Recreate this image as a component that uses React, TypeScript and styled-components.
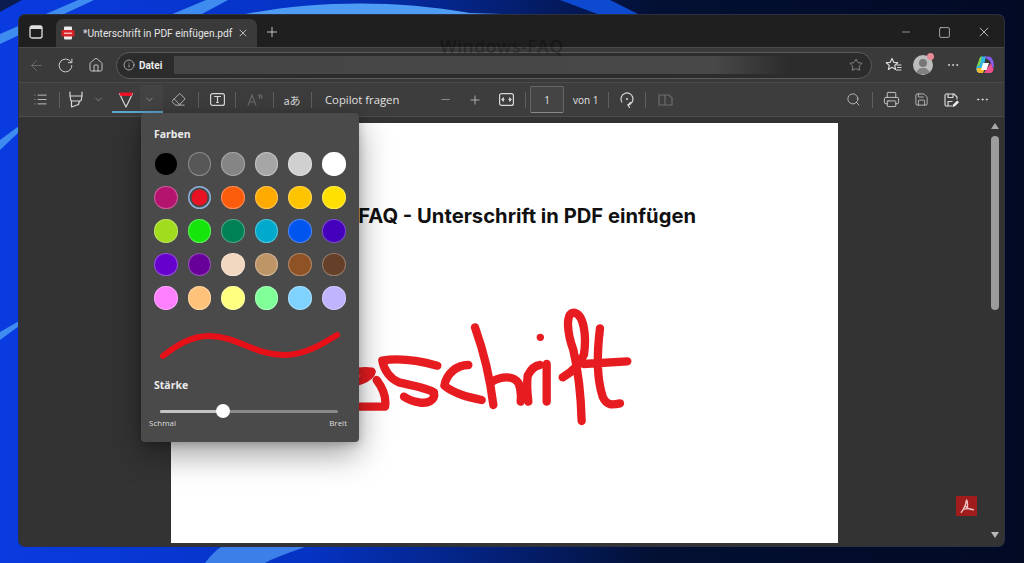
import React from 'react'
import styled, { createGlobalStyle } from 'styled-components'
import { ChevronDown, Eraser, Home, Info, List, Minus, MoreHorizontal, Plus, Printer, RotateCw, Search, Star, X, Square, ArrowLeft, Save } from 'lucide-react'

const Global = createGlobalStyle`
  html, body { margin: 0; padding: 0; background: #020a24; overflow: hidden; }
  * { box-sizing: border-box; }
`

const Desktop = styled.div`
  position: relative;
  width: 1024px;
  height: 563px;
  padding: 15px 20px 17px 19px;
  display: flex;
  font-family: "Open Sans", "Noto Sans", sans-serif;
  color: #e6e6e6;
`

const Wallpaper = styled.svg`
  position: absolute;
  inset: 0;
`

const Window = styled.div`
  position: relative;
  flex: 1;
  display: flex;
  flex-direction: column;
  background: #333;
  border-radius: 6px;
  box-shadow: 0 0 0 1px #2c3040;
  overflow: hidden;
`

const Watermark = styled.div`
  position: absolute;
  left: 421px;
  top: 19px;
  font-size: 17.5px;
  font-weight: 600;
  letter-spacing: 0.6px;
  color: rgba(0, 0, 0, 0.25);
  filter: blur(0.6px);
  z-index: 5;
`

const TabStrip = styled.div`
  height: 33px;
  flex: none;
  display: flex;
  align-items: flex-end;
  background: #1f1f1f;
  border-bottom: 1px solid #4b4b4b;
`

const StripBtn = styled.div<{ $w: number }>`
  width: ${p => p.$w}px;
  height: 100%;
  padding-top: 2px;
  flex: none;
  display: flex;
  align-items: center;
  justify-content: center;
  color: #dcdcdc;
`

const Tab = styled.div`
  width: 201px;
  height: 28px;
  margin-left: 3px;
  padding: 0 8px 0 5px;
  flex: none;
  display: flex;
  align-items: center;
  background: #3a3a3a;
  border-radius: 7px 7px 0 0;
  color: #e4e4e4;
`

const TabTitle = styled.span`
  flex: 1;
  margin-left: 8px;
  font-family: Roboto, "Open Sans", sans-serif;
  font-size: 10.2px;
  white-space: nowrap;
`

const WinControls = styled.div`
  margin-left: auto;
  display: flex;
  height: 100%;
  padding-right: 1px;
`

const AddressRow = styled.div`
  height: 34px;
  flex: none;
  display: flex;
  align-items: center;
  background: #3a3a3a;
  padding: 0 0 0 5px;
`

const RowBtn = styled.div<{ $w?: number; $ml?: number; $dim?: boolean }>`
  width: ${p => p.$w ?? 24}px;
  margin-left: ${p => p.$ml ?? 0}px;
  flex: none;
  display: flex;
  align-items: center;
  justify-content: center;
  color: ${p => (p.$dim ? '#777' : '#d8d8d8')};
`

const Pill = styled.div`
  width: 756px;
  height: 27px;
  margin-left: 8px;
  flex: none;
  display: flex;
  align-items: center;
  padding: 0 8px 0 6px;
  background: #2c2c2c;
  border: 1px solid #5c5c5c;
  border-radius: 14px;
`

const Scheme = styled.span`
  margin-left: 4px;
  font-family: Roboto, "Open Sans", sans-serif;
  font-size: 10px;
  font-weight: 700;
  color: #ededed;
`

const UrlBlur = styled.div`
  flex: 1;
  height: 18px;
  margin: 0 60px 0 12px;
  background: linear-gradient(to right, #454545 0, #484848 88%, #2c2c2c 100%);
`

const Avatar = styled.div`
  position: relative;
  width: 20px;
  height: 20px;
  border-radius: 50%;
  background: #bdbdbd;
  overflow: hidden;
`

const AvatarWrap = styled.div`
  position: relative;
  margin-left: 8px;
  width: 20px;
  height: 20px;
  flex: none;
`

const Badge = styled.div`
  position: absolute;
  right: -1px;
  top: -2px;
  width: 7px;
  height: 7px;
  border-radius: 50%;
  background: #e88c98;
`

const Toolbar = styled.div`
  height: 35px;
  flex: none;
  display: flex;
  align-items: center;
  padding: 0 10px 0 9px;
  background: #3d3d3d;
  border-top: 1px solid #4a4a4a;
  border-bottom: 1px solid #4d4d4d;
`

const Sep = styled.div<{ $ml: number }>`
  width: 1px;
  height: 16px;
  flex: none;
  margin-left: ${p => p.$ml}px;
  background: #5f5f5f;
`

const ActiveTool = styled.div`
  position: relative;
  width: 51px;
  height: 29px;
  margin-left: 7px;
  flex: none;
  display: flex;
  align-items: center;
  &::after {
    content: '';
    position: absolute;
    left: 0;
    right: 0;
    bottom: 1px;
    height: 2px;
    background: #5ea6d2;
  }
`

const ChevronCell = styled.div`
  flex: 1;
  height: 100%;
  display: flex;
  align-items: center;
  justify-content: center;
  padding-right: 5px;
  color: #bbb;
  background: #434343;
`

const Translate = styled.span`
  font-size: 11px;
  font-family: "Noto Sans CJK JP", "Open Sans", sans-serif;
  color: #d8d8d8;
`

const ToolLabel = styled.span<{ $w: number; $ml: number; $size?: number }>`
  width: ${p => p.$w}px;
  margin-left: ${p => p.$ml}px;
  flex: none;
  font-size: ${p => p.$size ?? 11.3}px;
  color: #e2e2e2;
  white-space: nowrap;
`

const PageInput = styled.div`
  width: 34px;
  height: 27px;
  margin-left: 4px;
  flex: none;
  display: flex;
  align-items: center;
  justify-content: center;
  font-size: 10px;
  color: #e2e2e2;
  background: #444;
  border: 1px solid #666;
  border-bottom-color: #8a8a8a;
  border-radius: 2px;
`

const RightTools = styled.div`
  margin-left: auto;
  display: flex;
  align-items: center;
`

const Main = styled.div`
  position: relative;
  flex: 1;
  min-height: 0;
  display: flex;
`

const PageArea = styled.div`
  flex: 1;
  padding: 6px 147px 3px 152px;
  display: flex;
`

const Page = styled.div`
  position: relative;
  flex: 1;
  background: #fff;
  padding-top: 82px;
  overflow: hidden;
`

const Heading = styled.h1`
  margin: 0;
  padding-right: 142px;
  text-align: right;
  font: 700 20.2px/22px Inter, "Liberation Sans", sans-serif;
  color: #111;
  white-space: nowrap;
`

const Signature = styled.svg`
  position: absolute;
  left: 169px;
  top: 67px;
`

const AcrobatBadge = styled.div`
  position: absolute;
  right: 27px;
  bottom: 30px;
  width: 21px;
  height: 20px;
  background: #a11d1d;
  display: flex;
  align-items: center;
  justify-content: center;
`

const Scrollbar = styled.div`
  width: 19px;
  flex: none;
  display: flex;
  flex-direction: column;
  align-items: center;
  padding: 6px 0 8px;
`

const ScrollThumb = styled.div`
  width: 8px;
  height: 174px;
  margin-top: 7px;
  background: #9c9c9c;
  border-radius: 4px;
`

const ScrollArrow = styled.div<{ $down?: boolean }>`
  width: 0;
  height: 0;
  border-left: 4.5px solid transparent;
  border-right: 4.5px solid transparent;
  ${p => (p.$down ? 'border-top: 6px solid #b8b8b8; margin-top: auto;' : 'border-bottom: 6px solid #a8a8a8;')}
`

const Popup = styled.div`
  position: absolute;
  left: 122px;
  top: -4px;
  width: 218px;
  height: 329px;
  padding: 14px 13px 0;
  background: #4a4a4a;
  border-radius: 4px;
  box-shadow: 0 12px 32px rgba(0, 0, 0, 0.38), 0 2px 8px rgba(0, 0, 0, 0.2);
  z-index: 3;
`

const SectionTitle = styled.div<{ $mt?: number }>`
  margin-top: ${p => p.$mt ?? 0}px;
  font-size: 10.5px;
  line-height: 15px;
  font-weight: 700;
  color: #ececec;
`

const Swatches = styled.div`
  display: grid;
  grid-template-columns: repeat(6, 23.6px);
  grid-auto-rows: 23.6px;
  gap: 10px;
  margin-top: 10px;
`

const Swatch = styled.div<{ $color: string; $selected?: boolean }>`
  border-radius: 50%;
  background: ${p => p.$color};
  box-shadow: ${p => (p.$selected
    ? 'inset 0 0 0 1.5px #86b4dc, inset 0 0 0 3.5px #4a4a4a'
    : 'inset 0 0 0 1px rgba(255, 255, 255, 0.3)')};
`

const Wave = styled.svg`
  display: block;
  margin: 13px 0 0 5px;
`

const SliderTrack = styled.div`
  position: relative;
  height: 3px;
  margin: 17px 8px 0 6px;
  background: #8a8a8a;
  border-radius: 2px;
`

const SliderFill = styled.div`
  height: 100%;
  background: #c4c4c4;
  border-radius: 2px;
`

const SliderThumb = styled.div`
  position: absolute;
  top: -6px;
  width: 14px;
  height: 14px;
  margin-left: -7px;
  border-radius: 50%;
  background: #fff;
`

const SliderLabels = styled.div`
  display: flex;
  justify-content: space-between;
  margin: 4px -1px 0 -5px;
  font-size: 8px;
  line-height: 11px;
  color: #dedede;
`

const colors = [
  '#000000', '#575757', '#858585', '#a6a6a6', '#d0d0d0', '#ffffff',
  '#b5146e', '#e81224', '#fb5c0b', '#ffaa00', '#ffc400', '#ffe000',
  '#a2dc1e', '#16e50c', '#008055', '#00aacc', '#0055ee', '#4400bb',
  '#6600cc', '#660099', '#f2d7c0', '#bd9567', '#8e5224', '#663f28',
  '#ff80ff', '#ffc27a', '#ffff80', '#80ff99', '#80d2ff', '#c0b3ff',
]

const strength = 35.5

const icon = { fill: 'none', stroke: 'currentColor', strokeWidth: 1.2, strokeLinecap: 'round' as const, strokeLinejoin: 'round' as const }

const SidebarIcon = () => (
  <svg width="14" height="14" viewBox="0 0 14 14" fill="none" stroke="#e0e0e0" strokeWidth="1.3">
    <rect x="1" y="1" width="12" height="12" rx="2" />
    <path d="M1 3a2 2 0 0 1 2-2h8a2 2 0 0 1 2 2v1H1z" fill="#e0e0e0" stroke="none" />
  </svg>
)

const PdfTabIcon = () => (
  <svg width="14" height="14" viewBox="0 0 14 14" style={{ flex: 'none' }}>
    <rect x="3" y="0.5" width="8" height="13" fill="#ececec" rx="1" />
    <rect x="0.5" y="4" width="13" height="6.5" fill="#d9232a" rx="1" />
    <rect x="3" y="6.6" width="8" height="1.3" fill="#f7c9ca" />
  </svg>
)

const HighlighterIcon = () => (
  <svg width="16" height="18" viewBox="0 0 16 18" {...icon}>
    <path d="M2 1v4h12V1M2 5l1 5h10l1-5M3.5 10v6l7-2.5 1-3.5" />
  </svg>
)

const PenIcon = () => (
  <svg width="16" height="18" viewBox="0 0 16 18" {...icon}>
    <path d="M1.5 2.5h13L10 12 8 16l-2-4z" />
    <path d="M1 1.5h14l-1.6 3.5H2.6z" fill="#e81224" stroke="none" />
  </svg>
)

const TextBoxIcon = () => (
  <svg width="15" height="13" viewBox="0 0 15 13" {...icon}>
    <rect x="0.6" y="0.6" width="13.8" height="11.8" rx="2" />
    <path d="M4.5 3.5h6M7.5 3.5v6M6.5 9.5h2" />
  </svg>
)

const ReadIcon = () => (
  <svg width="16" height="14" viewBox="0 0 16 14" fill="none" stroke="#6d6d6d" strokeWidth="1.1">
    <path d="M1 12.5 5 2l4 10.5M2.5 9h5M11 2c1.5 1 2 2.5 2 4M13 1c1.5 1.5 2 3 2 4.5" />
  </svg>
)

const FitIcon = () => (
  <svg width="15" height="13" viewBox="0 0 15 13" {...icon}>
    <rect x="0.6" y="0.6" width="13.8" height="11.8" rx="2" />
    <path d="M3 6.5h2M3 6.5l1.5-1.5M3 6.5 4.5 8M12 6.5h-2M12 6.5 10.5 5M12 6.5 10.5 8" />
  </svg>
)

const RotateIcon = () => (
  <svg width="16" height="17" viewBox="0 0 16 17" {...icon}>
    <path d="M2.8 11A6 6 0 1 1 9 13.9" />
    <path d="M11.5 11.5 9 14l1.5 2.5" />
    <circle cx="8" cy="8" r="1" fill="currentColor" stroke="none" />
  </svg>
)

const PageViewIcon = () => (
  <svg width="15" height="13" viewBox="0 0 15 13" fill="none" stroke="#6d6d6d" strokeWidth="1.2">
    <path d="M1 2h6v10H1zM7 2h4l3 3v7H7z" />
  </svg>
)

const SaveEditIcon = () => (
  <svg width="16" height="16" viewBox="0 0 16 16" {...icon}>
    <path d="M9 14H3.5A1.5 1.5 0 0 1 2 12.5v-9A1.5 1.5 0 0 1 3.5 2H11l3 3v2" />
    <path d="M5 2v3.5h5V2M5 14V9.5h4" />
    <path d="M9.5 15l.7-2.5 4-4 1.8 1.8-4 4z" fill="#eee" stroke="none" />
  </svg>
)

const FavoritesIcon = () => (
  <svg width="17" height="16" viewBox="0 0 17 16" {...icon}>
    <path d="M7 1.5 8.7 5.3l4 .4-3 2.7.9 4-3.6-2.1-3.600 2.100.9-4-3-2.700 4-.4zM12 8h4M12.500 10.500H16M11.500 13H16" />
  </svg>
)

const CopilotIcon = () => (
  <svg width="20" height="20" viewBox="0 0 20 20">
    <path d="M6 1.5h5L7 18H5C2 18 0.5 15 1.5 12z" fill="#2fb4e8" />
    <path d="M1.5 12 4 5c.5-2 1-3.5 3-3.5L5 10z" fill="#7ad14a" />
    <path d="M2 13c-1 3 1 5 3 5h3l2-5z" fill="#f4b62c" />
    <path d="M9 18h6c2 0 3-1.5 3.5-3.5L16 8z" fill="#ec4f8f" />
    <path d="M9 1.5h5c2 0 4 3 4.5 6L19 12c0 1-1 1-1.5 0L15 6z" fill="#8a5cf0" />
    <path d="M8 8h6l-2.5 7H6z" fill="#fff" />
  </svg>
)

function Tool({ children, ml }: { children: React.ReactNode; ml?: number }) {
  return <RowBtn $ml={ml}>{children}</RowBtn>
}

export default function App() {
  return (
    <Desktop>
      <Global />
      <Wallpaper width="1024" height="563" viewBox="0 0 1024 563">
        <defs>
          <linearGradient id="wp" x1="0" x2="1" y1="0" y2="0">
            <stop offset="0" stopColor="#0a3be0" />
            <stop offset="0.3" stopColor="#0533c4" />
            <stop offset="0.5" stopColor="#041f70" />
            <stop offset="0.64" stopColor="#031033" />
            <stop offset="1" stopColor="#020a24" />
          </linearGradient>
        </defs>
        <rect width="1024" height="563" fill="url(#wp)" />
        <path d="M0 0h22L0 12z" fill="#0a1c50" />
        <path d="M0 34 78 0h16L0 44z" fill="#3f8cf0" />
        <path d="M170 15 206 0h22l-28 15z" fill="#3f8cf0" />
        <path d="M0 150 19 132v-6L0 140zM0 340l19-14v-5L0 332z" fill="#3f8cf0" />
        <path d="M240 15c70-14 150-16 230-2l60 2z" fill="#4f9cf5" />
        <path d="M560 0h50l30 15h-40z" fill="#0d4ad0" />
        <path d="M205 563c15-20 28-26 60-20h50c-20 8-40 14-50 20z" fill="#3c7fe8" />
      </Wallpaper>
      <Window>
        <Watermark>Windows-FAQ</Watermark>
        <TabStrip>
          <StripBtn $w={34}><SidebarIcon /></StripBtn>
          <Tab>
            <PdfTabIcon />
            <TabTitle>*Unterschrift in PDF einfügen.pdf</TabTitle>
            <X size={12} strokeWidth={1.5} />
          </Tab>
          <StripBtn $w={30}><Plus size={16} strokeWidth={1.3} /></StripBtn>
          <WinControls>
            <StripBtn $w={38}><Minus size={12} strokeWidth={1.2} /></StripBtn>
            <StripBtn $w={39}><Square size={13} strokeWidth={1.3} /></StripBtn>
            <StripBtn $w={39}><X size={16} strokeWidth={1.2} /></StripBtn>
          </WinControls>
        </TabStrip>
        <AddressRow>
          <RowBtn $dim><ArrowLeft size={17} strokeWidth={1.1} /></RowBtn>
          <RowBtn $ml={5}><RotateCw size={17} strokeWidth={1.3} /></RowBtn>
          <RowBtn $ml={7}><Home size={16} strokeWidth={1.3} /></RowBtn>
          <Pill>
            <Info size={12} strokeWidth={1.3} color="#ddd" />
            <Scheme>Datei</Scheme>
            <UrlBlur />
            <Star size={14} strokeWidth={1.2} color="#aaa" />
          </Pill>
          <RowBtn $ml={9}><FavoritesIcon /></RowBtn>
          <AvatarWrap>
            <Avatar>
              <svg width="20" height="20" viewBox="0 0 20 20">
                <circle cx="10" cy="8" r="4" fill="#777" />
                <path d="M3 19c1-5 4-6 7-6s6 1 7 6z" fill="#808080" />
              </svg>
            </Avatar>
            <Badge />
          </AvatarWrap>
          <RowBtn $ml={8}><MoreHorizontal size={14} strokeWidth={1.5} /></RowBtn>
          <RowBtn $ml={8}><CopilotIcon /></RowBtn>
        </AddressRow>
        <Toolbar>
          <Tool><List size={15} strokeWidth={1.3} /></Tool>
          <Sep $ml={7} />
          <Tool ml={4}><HighlighterIcon /></Tool>
          <RowBtn $w={14} $ml={3}><ChevronDown size={11} strokeWidth={1.3} color="#aaa" /></RowBtn>
          <ActiveTool>
            <RowBtn $w={28}><PenIcon /></RowBtn>
            <ChevronCell><ChevronDown size={11} strokeWidth={1.3} /></ChevronCell>
          </ActiveTool>
          <Tool ml={3}><Eraser size={15} strokeWidth={1.2} /></Tool>
          <Sep $ml={8} />
          <Tool ml={6}><TextBoxIcon /></Tool>
          <Sep $ml={6} />
          <Tool ml={7}><ReadIcon /></Tool>
          <Sep $ml={6} />
          <Tool ml={6}><Translate>aあ</Translate></Tool>
          <Sep $ml={7} />
          <ToolLabel $w={75} $ml={13}>Copilot fragen</ToolLabel>
          <RowBtn $ml={33} $dim><Minus size={13} strokeWidth={1.3} color="#aaa" /></RowBtn>
          <Tool ml={6}><Plus size={14} strokeWidth={1.2} /></Tool>
          <Tool ml={7}><FitIcon /></Tool>
          <Sep $ml={7} />
          <PageInput>1</PageInput>
          <ToolLabel $w={24} $ml={9} $size={10}>von 1</ToolLabel>
          <Sep $ml={11} />
          <Tool ml={6}><RotateIcon /></Tool>
          <Sep $ml={6} />
          <Tool ml={7}><PageViewIcon /></Tool>
          <RightTools>
            <Tool><Search size={15} strokeWidth={1.2} /></Tool>
            <Sep $ml={7} />
            <Tool ml={6}><Printer size={17} strokeWidth={1.2} /></Tool>
            <Tool ml={6}><Save size={15} strokeWidth={1.2} /></Tool>
            <Tool ml={6}><SaveEditIcon /></Tool>
            <Tool ml={7}><MoreHorizontal size={15} strokeWidth={1.6} /></Tool>
          </RightTools>
        </Toolbar>
        <Main>
          <PageArea>
            <Page>
              <Heading>Windows-FAQ - Unterschrift in PDF einfügen</Heading>
              <Signature width="380" height="250" viewBox="0 0 1140 750" fill="none" stroke="#e71c20" strokeWidth="25" strokeLinecap="round" strokeLinejoin="round">
                <path d="M-30 570c40-20 90-30 125-25-5 20-50 35-85 40M-40 650h175c5-30-10-60-25-80" />
                <path d="M292 527c-55-15-110-25-165-15 5 30 25 55 50 65 40 10 80 15 105 30 5 25-20 35-45 30-20-3-35-10-45-17" />
                <path d="M385 525c-35 0-65 25-72 62 30 25 75 35 112 43" />
                <path d="M405 412c25 70 45 150 55 233M456 575c30-18 65-18 80 5 8 20 8 35 6 55" />
                <path d="M565 635c-3-25-5-55-2-78 10-20 20-30 37-32" />
                <path d="M620 522v113" />
                <circle cx="601" cy="442" r="11" fill="#e71c20" stroke="none" />
                <path d="M725 693c-2-70-8-140-25-213-18-50-25-110 2-112 30 5 38 70 30 125-12 30-40 55-64 69" />
                <path d="M780 415c-10 80-10 150 8 205 12 28 30 25 52 20M730 522l132-8" />
              </Signature>
            </Page>
          </PageArea>
          <Scrollbar>
            <ScrollArrow />
            <ScrollThumb />
            <ScrollArrow $down />
          </Scrollbar>
          <AcrobatBadge>
            <svg width="17" height="17" viewBox="0 0 16 16" fill="none" stroke="#f0c4c4" strokeWidth="1.3" strokeLinecap="round">
              <path d="M8 2c-.5 4-2 8-5 11.5M7.5 8c1.5 2 4 3 7 3M6 10.5c2.5-.8 5-.8 8 .5M8.3 2c1 3 1 5 .2 7.5" />
            </svg>
          </AcrobatBadge>
          <Popup>
            <SectionTitle>Farben</SectionTitle>
            <Swatches>
              {colors.map((c, i) => <Swatch key={i} $color={c} $selected={i === 7} />)}
            </Swatches>
            <Wave width="190" height="38" viewBox="0 0 190 38">
              <path d="M4 33C18 22 32 13 50 13c28 0 45 19 75 19 20 0 37-10 53-20" fill="none" stroke="#e81018" strokeWidth="6" strokeLinecap="round" />
            </Wave>
            <SectionTitle $mt={17}>Stärke</SectionTitle>
            <SliderTrack>
              <SliderFill style={{ width: `${strength}%` }} />
              <SliderThumb style={{ left: `${strength}%` }} />
            </SliderTrack>
            <SliderLabels>
              <span>Schmal</span>
              <span>Breit</span>
            </SliderLabels>
          </Popup>
        </Main>
      </Window>
    </Desktop>
  )
}
